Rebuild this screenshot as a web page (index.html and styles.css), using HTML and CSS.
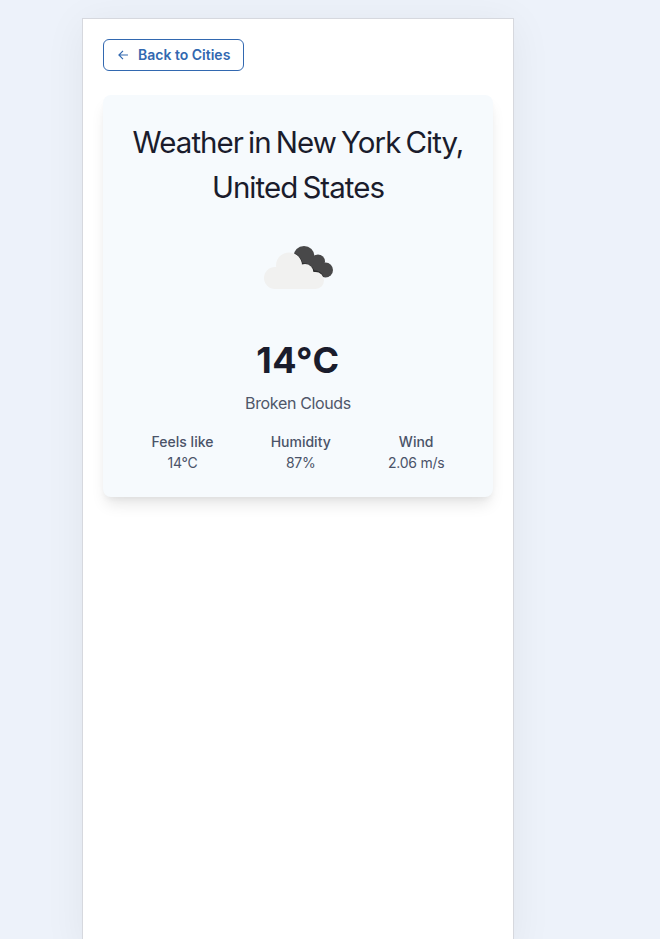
FILE: index.html
```html
<!DOCTYPE html>
<html lang="en">
<head>
<meta charset="utf-8">
<title>Weather</title>
<link rel="stylesheet" href="styles.css">
</head>
<body>
<main class="app">
  <button class="back" type="button">
    <svg class="back-icon" viewBox="0 0 24 24" aria-hidden="true"><path d="M20.500 12H5M12 5L5 12L12 19"/></svg>
    <span>Back to Cities</span>
  </button>
  <section class="card">
    <h1 class="title">Weather in New York City, United States</h1>
    <svg class="weather-icon" viewBox="0 0 100 100" aria-hidden="true">
      <g class="cloud-dark"><circle cx="56" cy="38.500" r="10.500"/><circle cx="70" cy="43.500" r="7"/><circle cx="77.500" cy="52" r="7.500"/><path d="M50 40H72L77 59H60Z"/></g>
      <path class="cloud-edge" d="M47 36Q53 40 54 46Q62 45 66 53Q72 53 75 59"/>
      <g class="cloud-light"><circle cx="41" cy="47.500" r="13"/><circle cx="27" cy="60" r="11"/><circle cx="57" cy="54.500" r="8.500"/><circle cx="67.500" cy="62.500" r="8.500"/><rect x="27" y="54" width="40" height="17"/></g>
    </svg>
    <p class="temperature">14°C</p>
    <p class="description">Broken Clouds</p>
    <dl class="stats">
      <div class="stat"><dt>Feels like</dt><dd>14°C</dd></div>
      <div class="stat"><dt>Humidity</dt><dd>87%</dd></div>
      <div class="stat"><dt>Wind</dt><dd>2.06 m/s</dd></div>
    </dl>
  </section>
</main>
</body>
</html>
```

FILE: styles.css
```css
* { box-sizing: border-box; }
html { height: 100%; overflow: hidden; }
body {
  height: 100%;
  margin: 0;
  padding: 18px 0 0 82px;
  overflow: hidden;
  background: #edf2fa;
  color: #1a1c2c;
  font-family: Inter, "Liberation Sans", sans-serif;
}
.app {
  width: 432px;
  height: 932px;
  padding: 20px;
  background: #fff;
  border: 1px solid #d6d8de;
  box-shadow: 0 5px 40px rgba(0, 0, 0, 0.06);
}
.back {
  display: flex;
  align-items: center;
  gap: 8px;
  width: 141px;
  height: 32px;
  margin: 0 0 24px;
  padding: 0 12px;
  border: 1px solid #3268b0;
  border-radius: 6px;
  background: transparent;
  color: #3268b0;
  font: 600 14px/20px Inter, sans-serif;
  white-space: nowrap;
}
.back-icon {
  flex: none;
  width: 14px;
  height: 14px;
  fill: none;
  stroke: currentColor;
  stroke-width: 2;
}
.card {
  height: 402px;
  padding: 25px 24px 24px;
  border-radius: 8px;
  background: #f6fafd;
  box-shadow: 0 10px 15px -3px rgba(0, 0, 0, 0.1), 0 4px 6px -2px rgba(0, 0, 0, 0.05);
  text-align: center;
}
.title {
  margin: 0 -10px;
  font-size: 29.5px;
  font-weight: 400;
  line-height: 45px;
  letter-spacing: -0.95px;
  word-spacing: -2.3px;
}
.weather-icon { display: block; width: 100px; height: 100px; margin: 8px auto 15px; }
.cloud-dark { fill: #484849; }
.cloud-edge { fill: none; stroke: #2a2a2b; stroke-width: 1.5; }
.cloud-light { fill: #f1f1f0; }
.temperature { margin: 0; font-size: 36px; font-weight: 700; line-height: 54px; letter-spacing: 0.6px; }
.description { margin: 4px 0 16px; color: #4f5769; font-size: 16px; line-height: 24px; letter-spacing: -0.35px; }
.stats {
  display: grid;
  grid-template-columns: auto auto auto;
  justify-content: space-around;
  margin: 0 -4px;
  color: #4a5368;
  font-size: 14px;
  line-height: 21px;
}
.stat dt { font-weight: 500; }
.stat dd { margin: 0; letter-spacing: -0.25px; }
```
